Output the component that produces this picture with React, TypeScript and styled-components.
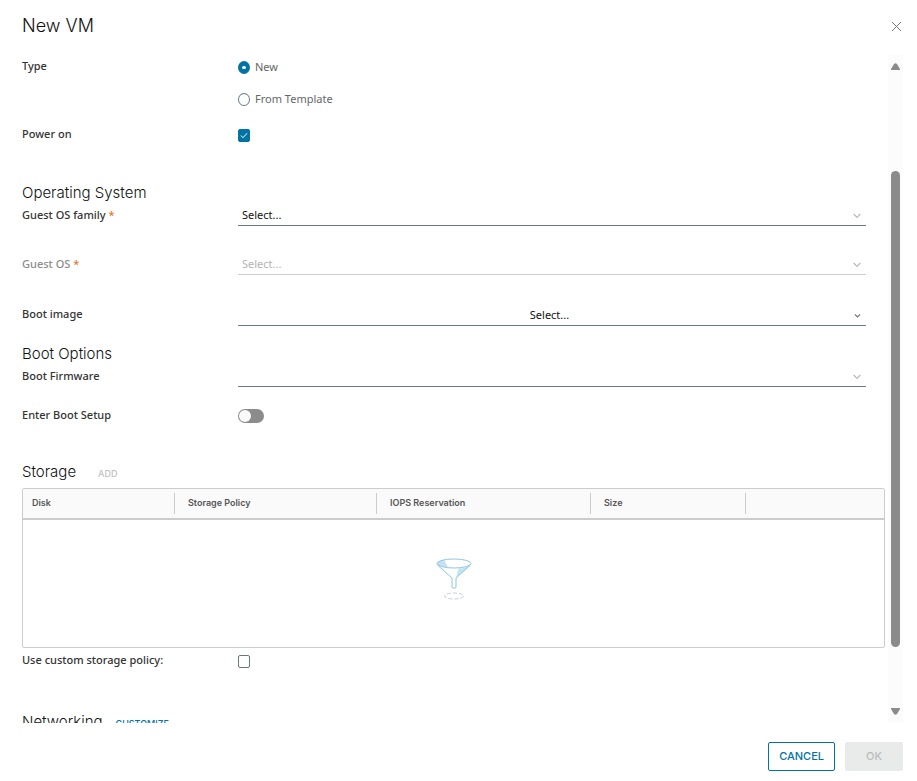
import React, { useState } from 'react';
import styled, { createGlobalStyle } from 'styled-components';

const color = {
  action: '#0072a3',
  text: '#111111',
  label: '#333333',
  body: '#666666',
  muted: '#8c8c8c',
  disabled: '#b3b3b3',
  line: '#cccccc',
  control: '#6a7a81',
  required: '#e8762d',
};

const displayFont = "Inter, 'Noto Sans', sans-serif";

const GlobalStyle = createGlobalStyle`
  *, *::before, *::after { box-sizing: border-box; }
  body {
    margin: 0;
    background: #ffffff;
    color: ${color.text};
    font-family: 'Noto Sans', 'Open Sans', sans-serif;
    font-size: 11px;
    line-height: 22px;
  }
  button, input, select { font: inherit; margin: 0; }
`;

const Dialog = styled.section`
  display: flex;
  flex-direction: column;
  height: 100vh;
  padding: 0 14px 0 22px;
`;

const Header = styled.header`
  display: flex;
  flex: none;
  align-items: center;
  justify-content: space-between;
  height: 55px;
  padding-bottom: 3px;
`;

const Title = styled.h1`
  margin: 0;
  font-family: ${displayFont};
  font-size: 18px;
  font-weight: 300;
  line-height: 24px;
`;

const CloseButton = styled.button`
  display: flex;
  padding: 2px;
  border: 0;
  background: none;
  color: #737373;
`;

const Body = styled.div`
  display: flex;
  flex: 1;
  gap: 3px;
  min-height: 0;
`;

const Content = styled.form`
  flex: 1;
  min-width: 0;
  overflow: hidden;
`;

const Scrollbar = styled.div`
  display: flex;
  flex: none;
  flex-direction: column;
  align-items: center;
  width: 15px;
  padding: 8px 0;
  background: #fcfcfc;
`;

const Gap = styled.div<{ $grow: number }>`
  flex: ${(p) => p.$grow};
`;

const Thumb = styled.div`
  flex: 475;
  width: 9px;
  border-radius: 5px;
  background: #8b8b8b;
`;

const Row = styled.div<{ $height: number }>`
  display: grid;
  grid-template-columns: 216px 1fr;
  align-items: start;
  min-height: ${(p) => p.$height}px;
  padding-right: 19px;
`;

const Label = styled.label<{ $disabled?: boolean }>`
  color: ${(p) => (p.$disabled ? color.muted : color.label)};
  font-weight: 500;
`;

const Required = styled.span`
  color: ${color.required};
`;

const SectionHead = styled.div<{ $gap?: number }>`
  display: flex;
  align-items: center;
  gap: ${(p) => p.$gap ?? 0}px;
  height: 22px;
`;

const SectionTitle = styled.h2`
  margin: 0;
  font-family: ${displayFont};
  font-size: 15px;
  font-weight: 300;
  line-height: 22px;
`;

const LinkButton = styled.button`
  padding: 4px 0 0;
  border: 0;
  background: none;
  color: ${color.action};
  font-family: ${displayFont};
  font-size: 9px;
  font-weight: 500;
  line-height: 18px;

  &:disabled { color: #c1c1c1; }
`;

const Options = styled.div`
  display: grid;
  gap: 10px;
  padding-top: 1px;
`;

const Option = styled.label`
  display: flex;
  align-items: center;
  gap: 5px;
  color: ${color.body};
`;

const Radio = styled.input`
  appearance: none;
  width: 12px;
  height: 13px;
  border: 1px solid ${color.control};
  border-radius: 50%;

  &:checked {
    border-width: 5px 4px;
    border-color: ${color.action};
    background: #ffffff;
  }
`;

const CheckCell = styled.div`
  display: grid;
  justify-items: start;
  padding-top: 6px;

  > * { grid-area: 1 / 1; }
`;

const Checkbox = styled.input`
  appearance: none;
  width: 12px;
  height: 13px;
  border: 1px solid ${color.control};
  border-radius: 2px;

  &:checked {
    border-color: ${color.action};
    background: ${color.action};
  }
`;

const CheckMark = styled.svg`
  width: 12px;
  height: 13px;
  pointer-events: none;
`;

const Switch = styled.input`
  appearance: none;
  display: flex;
  width: 26px;
  height: 14px;
  margin-top: 5px;
  padding: 1px;
  border-radius: 7px;
  background: ${color.muted};

  &::before {
    content: '';
    width: 12px;
    height: 12px;
    border-radius: 50%;
    background: #fafafa;
  }
  &:checked { justify-content: flex-end; background: #5eb715; }
`;

const Field = styled.div`
  display: grid;
  align-items: center;

  > * { grid-area: 1 / 1; }
`;

const Select = styled.select`
  appearance: none;
  width: 100%;
  height: 22px;
  padding: 1px 20px 0 4px;
  border: 0;
  border-bottom: 1px solid ${color.control};
  border-radius: 0;
  background: transparent;
  color: ${color.text};
  line-height: 20px;

  &:disabled {
    border-color: ${color.line};
    color: ${color.disabled};
    opacity: 1;
  }
`;

const PickerButton = styled.button`
  width: 100%;
  height: 23px;
  padding: 1px 5px 0 0;
  border: 0;
  border-bottom: 1px solid ${color.control};
  background: none;
  color: ${color.text};
  text-align: center;
`;

const Chevron = styled.svg<{ $dark?: boolean }>`
  justify-self: end;
  width: 8px;
  height: 6px;
  margin: 2px 5px 0 0;
  color: ${(p) => (p.$dark ? '#777777' : '#b8b8b8')};
  pointer-events: none;
`;

const TableFrame = styled.div`
  margin: 5px 0 1px;
  overflow: hidden;
  border: 1px solid ${color.line};
  border-radius: 2px;
`;

const Table = styled.table`
  width: 100%;
  border-collapse: collapse;
  table-layout: fixed;
`;

const Col = styled.col<{ $width?: number }>`
  width: ${(p) => (p.$width ? `${p.$width}px` : 'auto')};
`;

const HeadRow = styled.tr`
  border-bottom: 2px solid ${color.line};
  background: #fafafa;
`;

const HeadCell = styled.th`
  height: 30px;
  padding: 0;
  color: #565656;
  font-family: ${displayFont};
  font-size: 9px;
  font-weight: 600;
  line-height: 20px;
  text-align: left;
`;

const HeadText = styled.div<{ $first?: boolean; $last?: boolean }>`
  height: 21px;
  padding-left: ${(p) => (p.$first ? 9 : 13)}px;
  border-right: ${(p) => (p.$last ? '0' : `1px solid ${color.line}`)};
`;

const EmptyCell = styled.td`
  height: 128px;
  padding: 0 0 8px;
  line-height: 0;
  text-align: center;
`;

const Footer = styled.footer`
  display: flex;
  flex: none;
  align-items: center;
  justify-content: flex-end;
  gap: 10px;
  height: 58px;
  padding-top: 9px;
`;

const Button = styled.button`
  min-width: 58px;
  height: 29px;
  padding: 0 10px 1px;
  border: 1px solid ${color.action};
  border-radius: 2px;
  background: #ffffff;
  color: ${color.action};
  font-family: ${displayFont};
  font-size: 11px;
  font-weight: 500;
  line-height: 20px;

  &:disabled {
    border-color: #e9ebeb;
    background: #e9ebeb;
    color: #b9bcbc;
  }
`;

const ChevronIcon = ({ dark }: { dark?: boolean }) => (
  <Chevron $dark={dark} viewBox="0 0 8 6" fill="none" stroke="currentColor" aria-hidden="true">
    <path d={dark ? 'M2 1.500 4.500 4 7 1.500' : 'M.7 1 4 4.400 7.300 1'} strokeWidth="1.200" />
  </Chevron>
);

const Arrow = ({ down }: { down?: boolean }) => (
  <svg width="9" height="7" viewBox="0 0 9 7" fill="#8b8b8b" aria-hidden="true">
    <path d={down ? 'M0 1V0h9v1L6 6q-1.500 1.500-3 0z' : 'M0 6v1h9V6L6 1q-1.500-1.500-3 0z'} />
  </svg>
);

const Funnel = () => (
  <svg width="36" height="44" viewBox="0 0 36 44" fill="none" aria-label="No disks" role="img">
    <path d="M1.500 7.500 16 20v9.500q2 1.500 4 0V20L34.500 7.500Q18 14 1.500 7.500Z" fill="#ffffff" />
    <path d="M34 7.500 20 20l2.500-9.500Q29 10.300 34 7.500Z" fill="#c4e3f2" />
    <ellipse cx="18" cy="5.500" rx="17" ry="4.500" fill="#ffffff" />
    <path d="M8 1.800Q1 3.200 1 5.500q0 2.700 11 4.100Z" fill="#c4e3f2" />
    <ellipse cx="18" cy="5.500" rx="17" ry="4.500" stroke="#8fc8e3" />
    <path d="M1.500 7 16 20v9.500q2 1.500 4 0V20L34.500 7" stroke="#8fc8e3" />
    <ellipse cx="18" cy="38" rx="9.500" ry="3" stroke="#c8ced2" strokeDasharray="4 2" />
  </svg>
);

const columns: { title: string; width?: number }[] = [
  { title: 'Disk', width: 152 },
  { title: 'Storage Policy', width: 202 },
  { title: 'IOPS Reservation', width: 214 },
  { title: 'Size', width: 155 },
  { title: '' },
];

type SelectRowProps = {
  id: string;
  label: string;
  height: number;
  placeholder?: string;
  required?: boolean;
  disabled?: boolean;
};

const SelectRow = ({ id, label, height, placeholder = '', required, disabled }: SelectRowProps) => (
  <Row $height={height}>
    <Label htmlFor={id} $disabled={disabled}>
      {label} {required && <Required>*</Required>}
    </Label>
    <Field>
      <Select id={id} disabled={disabled} defaultValue="">
        <option value="">{placeholder}</option>
      </Select>
      <ChevronIcon />
    </Field>
  </Row>
);

export default function App() {
  const [type, setType] = useState('new');
  const [powerOn, setPowerOn] = useState(true);

  return (
    <>
      <GlobalStyle />
      <Dialog role="dialog" aria-labelledby="dialog-title">
        <Header>
          <Title id="dialog-title">New VM</Title>
          <CloseButton type="button" aria-label="Close">
            <svg width="9" height="9" viewBox="0 0 9 9" stroke="currentColor" aria-hidden="true">
              <path d="m0 0 9 9M9 0 0 9" />
            </svg>
          </CloseButton>
        </Header>

        <Body>
          <Content>
            <Row $height={68} role="radiogroup" aria-labelledby="type-label">
              <Label as="span" id="type-label">Type</Label>
              <Options>
                <Option>
                  <Radio type="radio" name="type" checked={type === 'new'} onChange={() => setType('new')} />
                  New
                </Option>
                <Option>
                  <Radio type="radio" name="type" checked={type === 'template'} onChange={() => setType('template')} />
                  From Template
                </Option>
              </Options>
            </Row>
            <Row $height={59}>
              <Label htmlFor="power-on">Power on</Label>
              <CheckCell>
                <Checkbox
                  id="power-on"
                  type="checkbox"
                  checked={powerOn}
                  onChange={(e) => setPowerOn(e.target.checked)}
                />
                {powerOn && (
                  <CheckMark viewBox="0 0 12 13" fill="none" stroke="#ffffff" aria-hidden="true">
                    <path d="m3 6.500 2 2.200 4-4.400" />
                  </CheckMark>
                )}
              </CheckCell>
            </Row>

            <SectionHead>
              <SectionTitle>Operating System</SectionTitle>
            </SectionHead>
            <SelectRow id="os-family" label="Guest OS family" height={49} placeholder="Select..." required />
            <SelectRow id="guest-os" label="Guest OS" height={50} placeholder="Select..." required disabled />
            <Row $height={40}>
              <Label htmlFor="boot-image">Boot image</Label>
              <Field>
                <PickerButton id="boot-image" type="button">Select...</PickerButton>
                <ChevronIcon dark />
              </Field>
            </Row>

            <SectionHead>
              <SectionTitle>Boot Options</SectionTitle>
            </SectionHead>
            <SelectRow id="boot-firmware" label="Boot Firmware" height={39} />
            <Row $height={57}>
              <Label htmlFor="boot-setup">Enter Boot Setup</Label>
              <Switch id="boot-setup" type="checkbox" role="switch" />
            </Row>

            <SectionHead $gap={22}>
              <SectionTitle>Storage</SectionTitle>
              <LinkButton type="button" disabled>ADD</LinkButton>
            </SectionHead>
            <TableFrame>
              <Table>
                <colgroup>
                  {columns.map((c) => <Col key={c.title} $width={c.width} />)}
                </colgroup>
                <thead>
                  <HeadRow>
                    {columns.map((c, i) => (
                      <HeadCell key={c.title}>
                        <HeadText $first={i === 0} $last={i === columns.length - 1}>{c.title}</HeadText>
                      </HeadCell>
                    ))}
                  </HeadRow>
                </thead>
                <tbody>
                  <tr>
                    <EmptyCell colSpan={columns.length}><Funnel /></EmptyCell>
                  </tr>
                </tbody>
              </Table>
            </TableFrame>
            <Row $height={62}>
              <Label htmlFor="custom-policy">Use custom storage policy:</Label>
              <CheckCell>
                <Checkbox id="custom-policy" type="checkbox" />
              </CheckCell>
            </Row>

            <SectionHead $gap={13}>
              <SectionTitle>Networking</SectionTitle>
              <LinkButton type="button">CUSTOMIZE</LinkButton>
            </SectionHead>
          </Content>

          <Scrollbar aria-hidden="true">
            <Arrow />
            <Gap $grow={101} />
            <Thumb />
            <Gap $grow={61} />
            <Arrow down />
          </Scrollbar>
        </Body>

        <Footer>
          <Button type="button">CANCEL</Button>
          <Button type="button" disabled>OK</Button>
        </Footer>
      </Dialog>
    </>
  );
}
